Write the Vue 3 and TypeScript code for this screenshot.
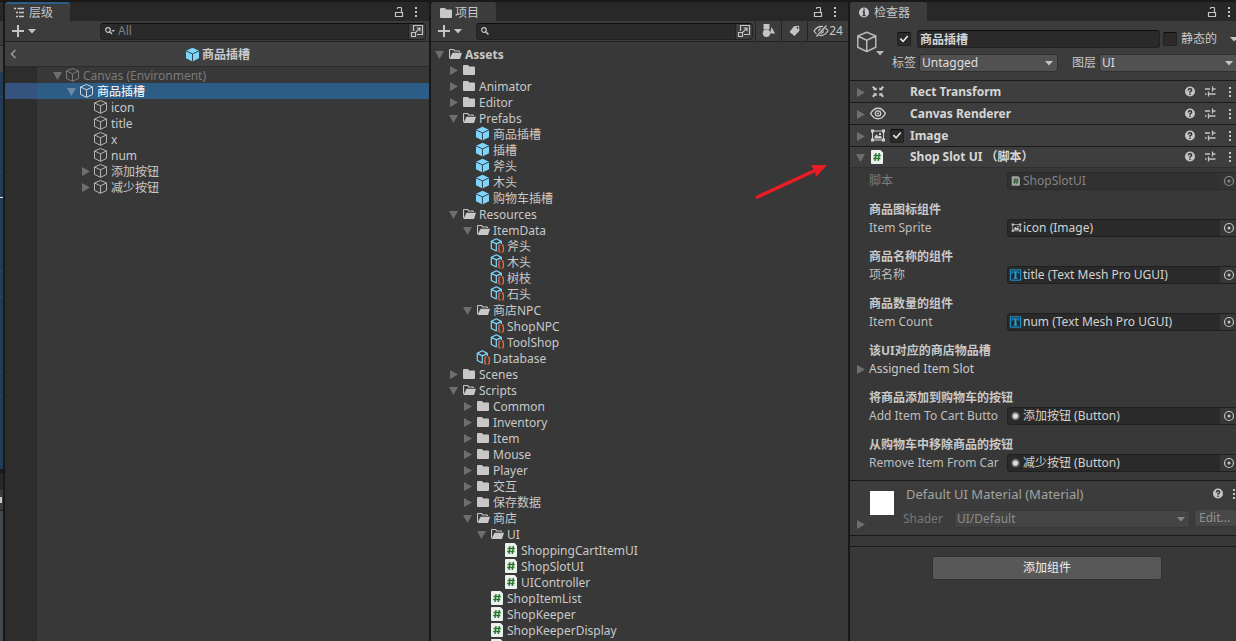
<script setup lang="ts">
import { ref } from 'vue'

type Fold = 'open' | 'closed' | 'none'

interface TreeNode {
  label: string
  depth: number
  icon: string
  fold: Fold
  state?: 'selected' | 'muted' | 'root'
}

interface ComponentHeader {
  title: string
  icon: string
  open: boolean
  toggle: boolean
}

interface Property {
  id: string
  heading?: string
  label: string
  kind: 'object' | 'foldout'
  icon?: string
  value?: string
  disabled?: boolean
}

const node = (depth: number, icon: string, fold: Fold, label: string, state?: TreeNode['state']): TreeNode => ({
  label,
  depth,
  icon,
  fold,
  state,
})

const hierarchy: TreeNode[] = [
  node(0, 'cube', 'open', 'Canvas (Environment)', 'muted'),
  node(1, 'cube', 'open', '商品插槽', 'selected'),
  node(2, 'cube', 'none', 'icon'),
  node(2, 'cube', 'none', 'title'),
  node(2, 'cube', 'none', 'x'),
  node(2, 'cube', 'none', 'num'),
  node(2, 'cube', 'closed', '添加按钮'),
  node(2, 'cube', 'closed', '减少按钮'),
]

const project: TreeNode[] = [
  node(0, 'folder-open', 'open', 'Assets', 'root'),
  node(1, 'folder', 'closed', ''),
  node(1, 'folder', 'closed', 'Animator'),
  node(1, 'folder', 'closed', 'Editor'),
  node(1, 'folder-open', 'open', 'Prefabs'),
  node(2, 'prefab', 'none', '商品插槽'),
  node(2, 'prefab', 'none', '插槽'),
  node(2, 'prefab', 'none', '斧头'),
  node(2, 'prefab', 'none', '木头'),
  node(2, 'prefab', 'none', '购物车插槽'),
  node(1, 'folder-open', 'open', 'Resources'),
  node(2, 'folder-open', 'open', 'ItemData'),
  node(3, 'asset', 'none', '斧头'),
  node(3, 'asset', 'none', '木头'),
  node(3, 'asset', 'none', '树枝'),
  node(3, 'asset', 'none', '石头'),
  node(2, 'folder-open', 'open', '商店NPC'),
  node(3, 'asset', 'none', 'ShopNPC'),
  node(3, 'asset', 'none', 'ToolShop'),
  node(2, 'asset', 'none', 'Database'),
  node(1, 'folder', 'closed', 'Scenes'),
  node(1, 'folder-open', 'open', 'Scripts'),
  node(2, 'folder', 'closed', 'Common'),
  node(2, 'folder', 'closed', 'Inventory'),
  node(2, 'folder', 'closed', 'Item'),
  node(2, 'folder', 'closed', 'Mouse'),
  node(2, 'folder', 'closed', 'Player'),
  node(2, 'folder', 'closed', '交互'),
  node(2, 'folder', 'closed', '保存数据'),
  node(2, 'folder-open', 'open', '商店'),
  node(3, 'folder-open', 'open', 'UI'),
  node(4, 'script', 'none', 'ShoppingCartItemUI'),
  node(4, 'script', 'none', 'ShopSlotUI'),
  node(4, 'script', 'none', 'UIController'),
  node(3, 'script', 'none', 'ShopItemList'),
  node(3, 'script', 'none', 'ShopKeeper'),
  node(3, 'script', 'none', 'ShopKeeperDisplay'),
  node(3, 'script', 'none', ''),
]

const components: ComponentHeader[] = [
  { title: 'Rect Transform', icon: 'rect-transform', open: false, toggle: false },
  { title: 'Canvas Renderer', icon: 'eye', open: false, toggle: false },
  { title: 'Image', icon: 'image', open: false, toggle: true },
  { title: 'Shop Slot UI （脚本）', icon: 'script', open: true, toggle: false },
]

const properties: Property[] = [
  { id: 'script', label: '脚本', kind: 'object', icon: 'script', value: 'ShopSlotUI', disabled: true },
  { id: 'sprite', heading: '商品图标组件', label: 'Item Sprite', kind: 'object', icon: 'image', value: 'icon (Image)' },
  { id: 'name', heading: '商品名称的组件', label: '项名称', kind: 'object', icon: 'tmp', value: 'title (Text Mesh Pro UGUI)' },
  { id: 'count', heading: '商品数量的组件', label: 'Item Count', kind: 'object', icon: 'tmp', value: 'num (Text Mesh Pro UGUI)' },
  { id: 'slot', heading: '该UI对应的商店物品槽', label: 'Assigned Item Slot', kind: 'foldout' },
  { id: 'add', heading: '将商品添加到购物车的按钮', label: 'Add Item To Cart Butto', kind: 'object', icon: 'button', value: '添加按钮 (Button)' },
  { id: 'remove', heading: '从购物车中移除商品的按钮', label: 'Remove Item From Car', kind: 'object', icon: 'button', value: '减少按钮 (Button)' },
]

const hierarchyQuery = ref('')
const projectQuery = ref('')
const objectName = ref('商品插槽')
const objectActive = ref(true)
const objectStatic = ref(false)
const imageEnabled = ref(true)
</script>

<template>
  <div class="editor">
    <svg class="sprite" aria-hidden="true">
      <symbol id="i-fold-open" viewBox="0 0 14 16"><path d="M1 5h9L5.500 13z" fill="currentColor" /></symbol>
      <symbol id="i-fold-closed" viewBox="0 0 14 16"><path d="M2 4v9l8-4.500z" fill="currentColor" /></symbol>
      <symbol id="i-caret" viewBox="0 0 8 8"><path d="M0 2h8L4 6.500z" fill="currentColor" /></symbol>
      <symbol id="i-cube" viewBox="0 0 16 16">
        <path d="M6.500 1.500 12.500 4v7.500L6.500 14.300.5 11.500V4zM.5 4l6 2.800 6-2.800M6.500 6.800v7.500" fill="none" stroke="currentColor" stroke-width="1" stroke-linejoin="round" />
      </symbol>
      <symbol id="i-prefab" viewBox="0 0 16 16">
        <path d="M6.500.7 13 3.700v7.500L6.500 14.500 0 11.200V3.700z" fill="#7fd6fd" />
        <path d="M0 3.900l6.500 3 6.500-3M6.500 6.900v7.600" fill="none" stroke="#38444c" stroke-width="1" />
      </symbol>
      <symbol id="i-asset" viewBox="0 0 16 16">
        <path d="M6.500 12.800l-.2.200-5-2.500V3.400L6.300.800l5 2.600v2.500M1.300 3.400l5 2.500 5-2.500M6.300 5.900v7" fill="none" stroke="#7fd6fd" stroke-width="1.200" stroke-linejoin="round" />
        <path d="M10.500 7H9.700q-.7 0-.7.700v2q0 .8-.9.800.9 0 .9.800v2q0 .7.700.7h.8M11.700 7h.8q.7 0 .7.700v2q0 .8.900.8-.9 0-.9.800v2q0 .7-.7.700h-.8" fill="none" stroke="#ff6d40" stroke-width="1.200" />
      </symbol>
      <symbol id="i-folder" viewBox="0 0 16 16"><path d="M1 4q0-1 1-1h4l1.200 1.500H12q1 0 1 1V12q0 1-1 1H2q-1 0-1-1z" fill="currentColor" /></symbol>
      <symbol id="i-folder-open" viewBox="0 0 16 16">
        <path d="M1 4q0-1 1-1h4l1 1.500h4q1 0 1 1V6h-1.100v-.4H6.300L5.400 4.100H2.100V11L1 13z" fill="currentColor" />
        <path d="M4.500 6.800H14L12 13H1.500z" fill="currentColor" />
      </symbol>
      <symbol id="i-script" viewBox="0 0 16 16">
        <path d="M1 2q0-1 1-1h8.500L13 3.500V14q0 1-1 1H2q-1 0-1-1z" fill="#ecf0ec" />
        <path d="M6 4 5 12M9.300 4l-1 8M3.600 6.500h7.200M3.200 9.500h7.200" fill="none" stroke="#26752c" stroke-width="1.400" />
      </symbol>
      <symbol id="i-list" viewBox="0 0 16 16"><path d="M1 3.500h2M4.500 3.500H11M3 7.500h2M6 7.500h5M3 11.500h2M6 11.500h5" stroke="currentColor" stroke-width="1.400" /></symbol>
      <symbol id="i-info" viewBox="0 0 16 16">
        <circle cx="6" cy="7.500" r="5" fill="currentColor" /><path d="M6 3.700v1.800M4.800 6.800H6v3.700M4.600 10.500h2.900" fill="none" stroke="#333" stroke-width="1.500" />
      </symbol>
      <symbol id="i-lock" viewBox="0 0 16 16"><path d="M4.500 8.500h7v4h-7zM6.500 5V4.300q0-.8.8-.8h2.400q.8 0 .8.8v4.200" fill="none" stroke="currentColor" stroke-width="1.200" /></symbol>
      <symbol id="i-dots" viewBox="0 0 16 16"><path d="M7 3h2v2H7zM7 7h2v2H7zM7 11h2v2H7z" fill="currentColor" /></symbol>
      <symbol id="i-plus" viewBox="0 0 12 12"><path d="M6 0v12M0 6h12" stroke="currentColor" stroke-width="2" /></symbol>
      <symbol id="i-search" viewBox="0 0 12 12"><circle cx="4" cy="5" r="2.300" fill="none" stroke="currentColor" stroke-width="1.200" /><path d="M5.700 6.700 8.500 9.500" stroke="currentColor" stroke-width="1.500" /></symbol>
      <symbol id="i-search-menu" viewBox="0 0 12 12"><circle cx="4" cy="5" r="2.300" fill="none" stroke="currentColor" stroke-width="1.200" /><path d="M5.700 6.700 8 9" stroke="currentColor" stroke-width="1.500" /><path d="M7.500 5H11L9.300 7z" fill="currentColor" /></symbol>
      <symbol id="i-expand" viewBox="0 0 16 16"><path d="M4.500 8V2.500h9v9H8M2.500 9.500h4v4h-4zM6.700 9.300 11 5M7.700 5H11v3.300" fill="none" stroke="currentColor" stroke-width="1.200" /></symbol>
      <symbol id="i-shapes" viewBox="0 0 16 16"><path d="M2.500 1h6v5.500h-6z" fill="currentColor" /><path d="m10.500 4 3.500 6.500H9z" fill="currentColor" /><circle cx="5.500" cy="10.300" r="3.700" fill="currentColor" /></symbol>
      <symbol id="i-tag" viewBox="0 0 16 16"><path fill-rule="evenodd" d="M7 3.200 12 2.700l.5 5-5 5.200L2.500 9zM9.500 4.800a1 1 0 1 0 2 0 1 1 0 0 0-2 0z" fill="currentColor" /></symbol>
      <symbol id="i-hidden" viewBox="0 0 16 16"><path d="M1 8q3-4.500 7-4.500T15 8q-3 4.500-7 4.500T1 8z" fill="none" stroke="currentColor" stroke-width="1.300" /><circle cx="8" cy="8" r="2.800" fill="currentColor" /><path d="M3 13.500 13 2.500" stroke="#3c3c3c" stroke-width="3" /><path d="M3.500 13.500 13.500 2.500" stroke="currentColor" stroke-width="1.300" /></symbol>
      <symbol id="i-eye" viewBox="0 0 16 16"><path d="M.6 7.500Q3.500 2.200 8 2.200t7.400 5.300Q12.500 12.800 8 12.800T.6 7.500z" fill="none" stroke="currentColor" stroke-width="1.400" /><circle cx="8" cy="7.500" r="2.700" fill="none" stroke="currentColor" stroke-width="1.200" /><circle cx="8" cy="7.500" r="1" fill="currentColor" /></symbol>
      <symbol id="i-rect-transform" viewBox="0 0 16 16"><path d="M2 3.500 3.700 2l1.500 2L6.700 3.500v2.800H3L4 5zM14 3.500 12.300 2l-1.500 2-1.500-.5v2.800H13L12 5zM2 12 3.700 13.500l1.500-2 1.500.5V9.200H3l1 1.300zM14 12l-1.700 1.500-1.500-2-1.500.5V9.200H13l-1 1.300z" fill="currentColor" /></symbol>
      <symbol id="i-image" viewBox="0 0 16 16"><path d="M3 3h10M3 12h10M2.500 4v8M13.500 4v8" stroke="currentColor" stroke-width="1" /><path d="M1 1.500h3v3H1zM12 1.500h3v3h-3zM1 10.500h3v3H1zM12 10.500h3v3h-3zM4.500 10.500v-2L6.500 6.500l2 2 1.500-1L11.700 9v1.500zM9 5h2v2H9z" fill="currentColor" /></symbol>
      <symbol id="i-tmp" viewBox="0 0 16 16"><path d="M2.500 2.500h11v11h-11z" fill="none" stroke="#1ba6ee" /><path d="M4.500 4.700h7v2M4.500 4.200v2.500M6 11.500h4" fill="none" stroke="#1ba6ee" /><path d="M8 4.500v7" stroke="#1ba6ee" stroke-width="2" /></symbol>
      <symbol id="i-button" viewBox="0 0 16 16"><circle cx="8" cy="8" r="4.500" fill="#707070" /><circle cx="8" cy="8" r="2.800" fill="#dedede" /></symbol>
      <symbol id="i-help" viewBox="0 0 16 16"><circle cx="8" cy="7.500" r="5" fill="currentColor" /><path d="M6.300 6.500Q6.300 4.800 8 4.800T9.700 6.200Q9.700 7.100 8 7.700V8.700M8 9.600V11" fill="none" stroke="#303030" stroke-width="1.400" /></symbol>
      <symbol id="i-sliders" viewBox="0 0 16 16"><path d="M3 5h5M11 5h2.500M10.500 2.500v5M3 10h1.500M7 10h6.500M6.500 7.500v5" fill="none" stroke="currentColor" stroke-width="1.300" /></symbol>
      <symbol id="i-target" viewBox="0 0 16 16"><circle cx="8" cy="8" r="4.500" fill="none" stroke="currentColor" stroke-width="1.200" /><circle cx="8" cy="8" r="1.500" fill="currentColor" /></symbol>
      <symbol id="i-back" viewBox="0 0 8 12"><path d="M6.500 2 2.500 6l4 4" fill="none" stroke="currentColor" stroke-width="1.500" /></symbol>
    </svg>

    <aside class="scene-edge" aria-hidden="true">
      <span class="edge-tab"></span>
      <span class="edge-bar"></span>
      <span class="edge-light"></span>
      <span class="edge-view"></span>
      <span class="edge-tab low"></span>
      <span class="edge-bar low"></span>
      <span class="edge-rest"></span>
    </aside>

    <section class="panel" aria-label="层级">
      <header class="tabs">
        <button class="tab focused"><svg class="ic"><use href="#i-list" /></svg>层级</button>
        <span class="grow"></span>
        <button class="tab-tool" aria-label="lock"><svg class="ic"><use href="#i-lock" /></svg></button>
        <button class="tab-tool" aria-label="menu"><svg class="ic"><use href="#i-dots" /></svg></button>
      </header>
      <div class="toolbar">
        <button class="add" aria-label="create"><svg class="plus"><use href="#i-plus" /></svg><svg class="caret"><use href="#i-caret" /></svg></button>
        <div class="search wide">
          <svg class="small"><use href="#i-search-menu" /></svg>
          <input v-model="hierarchyQuery" type="text" placeholder="All" aria-label="search hierarchy" />
          <button class="expand" aria-label="open search"><svg class="ic"><use href="#i-expand" /></svg></button>
        </div>
      </div>
      <div class="breadcrumb">
        <button class="back" aria-label="back"><svg><use href="#i-back" /></svg></button>
        <div class="crumb"><svg class="ic"><use href="#i-prefab" /></svg>商品插槽</div>
      </div>
      <ul class="tree scene-tree">
        <li v-for="(item, i) in hierarchy" :key="i" class="row" :class="item.state">
          <span class="gutter"></span>
          <span v-for="d in item.depth" :key="d" class="indent"></span>
          <svg class="fold"><use v-if="item.fold !== 'none'" :href="'#i-fold-' + item.fold" /></svg>
          <svg class="ic"><use :href="'#i-' + item.icon" /></svg>
          <span class="label">{{ item.label }}</span>
        </li>
      </ul>
    </section>

    <section class="panel project" aria-label="项目">
      <header class="tabs">
        <button class="tab"><svg class="ic"><use href="#i-folder" /></svg>项目</button>
        <span class="grow"></span>
        <button class="tab-tool" aria-label="lock"><svg class="ic"><use href="#i-lock" /></svg></button>
        <button class="tab-tool" aria-label="menu"><svg class="ic"><use href="#i-dots" /></svg></button>
      </header>
      <div class="toolbar">
        <button class="add" aria-label="create"><svg class="plus"><use href="#i-plus" /></svg><svg class="caret"><use href="#i-caret" /></svg></button>
        <div class="search">
          <svg class="small"><use href="#i-search" /></svg>
          <input v-model="projectQuery" type="text" aria-label="search project" />
          <button class="expand" aria-label="open search"><svg class="ic"><use href="#i-expand" /></svg></button>
        </div>
        <button class="filter" aria-label="filter by type"><svg class="ic"><use href="#i-shapes" /></svg></button>
        <button class="filter" aria-label="filter by label"><svg class="ic"><use href="#i-tag" /></svg></button>
        <button class="filter hidden-count"><svg class="ic"><use href="#i-hidden" /></svg>24</button>
      </div>
      <ul class="tree asset-tree">
        <li v-for="(item, i) in project" :key="i" class="row" :class="item.state">
          <span v-for="d in item.depth" :key="d" class="indent"></span>
          <svg class="fold"><use v-if="item.fold !== 'none'" :href="'#i-fold-' + item.fold" /></svg>
          <svg class="ic"><use :href="'#i-' + item.icon" /></svg>
          <span class="label">{{ item.label }}</span>
        </li>
      </ul>
      <svg class="pointer" viewBox="0 0 74 38" aria-hidden="true">
        <path d="M3.500 34 61 7.500" stroke="#ec1c24" stroke-width="3.500" stroke-linecap="round" />
        <path d="M57 2 73 2 62 14 61 8.500z" fill="#ec1c24" />
      </svg>
    </section>

    <section class="panel inspector" aria-label="检查器">
      <div class="sheet">
        <header class="tabs">
          <button class="tab"><svg class="ic"><use href="#i-info" /></svg>检查器</button>
          <span class="grow"></span>
          <button class="tab-tool" aria-label="lock"><svg class="ic"><use href="#i-lock" /></svg></button>
          <button class="tab-tool" aria-label="menu"><svg class="ic"><use href="#i-dots" /></svg></button>
        </header>

        <div class="object">
          <button class="object-icon" aria-label="icon"><svg class="big"><use href="#i-cube" /></svg><svg class="caret"><use href="#i-caret" /></svg></button>
          <div class="object-rows">
            <div class="object-row first">
              <input v-model="objectActive" type="checkbox" class="check" aria-label="active" />
              <input v-model="objectName" type="text" class="name" aria-label="name" />
              <label class="static"><input v-model="objectStatic" type="checkbox" class="check" />静态的</label>
              <button class="static-menu" aria-label="static flags"><svg class="caret"><use href="#i-caret" /></svg></button>
            </div>
            <div class="object-row second">
              <label for="tag">标签</label>
              <div class="select"><select id="tag"><option>Untagged</option></select><svg class="caret"><use href="#i-caret" /></svg></div>
              <label for="layer" class="layer">图层</label>
              <div class="select"><select id="layer"><option>UI</option></select><svg class="caret"><use href="#i-caret" /></svg></div>
            </div>
          </div>
        </div>

        <div v-for="c in components" :key="c.title" class="component" :class="{ open: c.open }">
          <svg class="fold"><use :href="c.open ? '#i-fold-open' : '#i-fold-closed'" /></svg>
          <svg class="ic"><use :href="'#i-' + c.icon" /></svg>
          <span class="toggle-slot"><input v-if="c.toggle" v-model="imageEnabled" type="checkbox" class="check" :aria-label="c.title" /></span>
          <h2>{{ c.title }}</h2>
          <button class="tool" aria-label="help"><svg class="ic"><use href="#i-help" /></svg></button>
          <button class="tool" aria-label="presets"><svg class="ic"><use href="#i-sliders" /></svg></button>
          <button class="tool" aria-label="menu"><svg class="ic"><use href="#i-dots" /></svg></button>
        </div>

        <div class="properties">
          <template v-for="p in properties" :key="p.id">
            <h3 v-if="p.heading">{{ p.heading }}</h3>
            <div class="property" :class="{ disabled: p.disabled }">
              <button v-if="p.kind === 'foldout'" class="foldout"><svg class="fold"><use href="#i-fold-closed" /></svg>{{ p.label }}</button>
              <template v-else>
                <label :for="'field-' + p.id">{{ p.label }}</label>
                <div class="field">
                  <svg class="kind" :class="p.icon"><use :href="'#i-' + p.icon" /></svg>
                  <input :id="'field-' + p.id" type="text" :value="p.value" readonly :disabled="p.disabled" />
                  <button class="pick" aria-label="pick object" :disabled="p.disabled"><svg class="ic"><use href="#i-target" /></svg></button>
                </div>
              </template>
            </div>
          </template>
        </div>

        <div class="material">
          <svg class="fold"><use href="#i-fold-closed" /></svg>
          <span class="thumb"></span>
          <div class="material-body">
            <div class="material-title">
              <span class="grow">Default UI Material (Material)</span>
              <button class="tool" aria-label="help"><svg class="ic"><use href="#i-help" /></svg></button>
              <button class="tool" aria-label="menu"><svg class="ic"><use href="#i-dots" /></svg></button>
            </div>
            <div class="shader">
              <label for="shader">Shader</label>
              <div class="select"><select id="shader" disabled><option>UI/Default</option></select><svg class="caret"><use href="#i-caret" /></svg></div>
              <button class="edit" disabled>Edit...</button>
            </div>
          </div>
        </div>
        <div class="divider"></div>
        <div class="footer"><button class="add-component">添加组件</button></div>
      </div>
    </section>
  </div>
</template>

<style>
html,
body {
  background: #191919;
  overflow: hidden;
}
</style>

<style scoped>
* {
  box-sizing: border-box;
}
.editor {
  display: grid;
  grid-template-columns: 3px minmax(0, 424fr) minmax(0, 417fr) minmax(0, 386fr);
  column-gap: 2px;
  height: 100vh;
  padding-top: 2px;
  overflow: hidden;
  background: #191919;
  color: #c8c8c8;
  font: 12px/16px 'Noto Sans', 'Noto Sans CJK SC', sans-serif;
}
.sprite {
  position: absolute;
  width: 0;
  height: 0;
}
button,
input,
select {
  margin: 0;
  padding: 0;
  border: 0;
  background: none;
  color: inherit;
  font: inherit;
  min-width: 0;
  outline: none;
}
svg {
  display: block;
  flex: none;
}
.ic {
  width: 16px;
  height: 16px;
}
.small {
  width: 12px;
  height: 12px;
}
.caret {
  width: 8px;
  height: 8px;
}
.fold {
  width: 14px;
  height: 16px;
  color: #6e6e6e;
}
.grow {
  flex: 1;
}

.scene-edge {
  display: flex;
  flex-direction: column;
}
.edge-tab {
  height: 19px;
  background: #282828;
}
.edge-tab.low {
  margin-top: 4px;
  height: 17px;
}
.edge-bar {
  height: 25px;
  background: #3c3c3c;
  border-bottom: 1px solid #232323;
}
.edge-bar.low {
  height: 21px;
  background: linear-gradient(#ccc, #ccc) 0 7px / 2px 6px no-repeat #3c3c3c;
}
.edge-light {
  height: 26px;
  background: #464646;
}
.edge-view {
  height: 397px;
  background: linear-gradient(#e8e8e8, #e8e8e8) 0 125px / 3px 1px no-repeat,
    repeating-linear-gradient(#213c57 0 24px, #2b4660 24px 25px);
}
.edge-rest {
  flex: 1;
  background: #43484d;
}

.panel {
  position: relative;
  display: flex;
  flex-direction: column;
  min-width: 0;
  overflow: hidden;
  background: #383838;
  border-radius: 3px 3px 0 0;
}
.tabs {
  display: flex;
  flex: none;
  height: 19px;
  padding-right: 5px;
  background: #282828;
}
.tab {
  display: flex;
  align-items: center;
  padding: 3px 17px 0 8px;
  background: #3c3c3c;
  border-radius: 3px 3px 0 0;
  color: #c8c8c8;
}
.tab.focused {
  padding-top: 1px;
  border-top: 2px solid #2c5d87;
}
.tab-tool {
  display: flex;
  justify-content: center;
  align-items: center;
  width: 17px;
  color: #c4c4c4;
}
.toolbar {
  display: flex;
  flex: none;
  align-items: center;
  height: 21px;
  background: #3c3c3c;
  border-bottom: 1px solid #232323;
}
.add {
  display: flex;
  align-items: center;
  gap: 4px;
  padding-left: 7px;
  color: #c4c4c4;
}
.plus {
  width: 12px;
  height: 12px;
}
.search {
  display: flex;
  flex: 1;
  align-items: center;
  height: 17px;
  margin: 0 2px 0 14px;
  overflow: hidden;
  background: #2a2a2a;
  border: 1px solid #212121;
  border-top-color: #0d0d0d;
  border-radius: 4px;
  color: #c4c4c4;
}
.search.wide {
  margin-left: 64px;
  margin-right: 3px;
}
.search .small {
  margin: 0 2px 0 3px;
}
.search input {
  flex: 1;
  height: 15px;
}
.search input::placeholder {
  color: #7f7f7f;
  opacity: 1;
}
.expand {
  width: 17px;
  height: 15px;
  display: flex;
  align-items: center;
  background: #3c3c3c;
  border-left: 1px solid #212121;
}
.filter {
  display: flex;
  align-items: center;
  justify-content: center;
  width: 26px;
  height: 20px;
  border-left: 1px solid #232323;
  color: #c4c4c4;
}
.filter.hidden-count {
  width: 41px;
}
.breadcrumb {
  position: relative;
  display: flex;
  flex: none;
  align-items: center;
  justify-content: center;
  height: 25px;
  background: #404040;
  border-bottom: 1px solid #2a2a2a;
}
.back {
  position: absolute;
  left: 4px;
}
.back svg {
  width: 8px;
  height: 12px;
  color: #9a9a9a;
}
.crumb {
  display: flex;
  align-items: center;
  padding: 1px 0 0 2px;
  font-weight: 700;
}

.tree {
  flex: 1;
  margin: 0;
  padding: 0;
  list-style: none;
  min-height: 0;
  overflow: hidden;
}
.scene-tree {
  background: linear-gradient(90deg, #2d2d2d 32px, #383838 32px);
}
.asset-tree {
  padding: 4px 0 0 3px;
}
.row {
  display: flex;
  height: 16px;
  white-space: nowrap;
}
.label {
  margin-left: 1px;
  line-height: 18px;
}
.gutter {
  width: 47px;
}
.indent {
  width: 14px;
}
.scene-tree .ic {
  color: #b4b4b4;
}
.row.selected {
  background: linear-gradient(90deg, #36527f 32px, #2c5d87 32px);
  color: #fff;
}
.row.selected .ic {
  color: #c8d4de;
}
.row.selected .fold {
  color: #6a8aa5;
}
.row.muted,
.row.muted .ic {
  color: #7a7a7a;
}
.row.root {
  font-weight: 700;
}
.pointer {
  position: absolute;
  top: 161px;
  right: 20px;
  width: 74px;
  height: 38px;
  fill: none;
}

.sheet {
  margin-right: -6px;
}
.object {
  display: flex;
  height: 60px;
  background: #3c3c3c;
  border-bottom: 1px solid #1a1a1a;
}
.object-icon {
  display: flex;
  align-items: flex-start;
  width: 42px;
  padding: 9px 0 0 7px;
  color: #b8b8b8;
}
.big {
  width: 24px;
  height: 24px;
}
.object-icon .caret {
  margin: 19px 0 0 -5px;
}
.object-rows {
  flex: 1;
  min-width: 0;
  padding: 9px 4px 0 0;
}
.object-row {
  display: flex;
  align-items: center;
  height: 18px;
}
.object-row.first {
  padding-left: 5px;
}
.object-row.second {
  margin-top: 6px;
}
.check {
  appearance: none;
  display: block;
  flex: none;
  width: 14px;
  height: 14px;
  background: #2a2a2a;
  border: 1px solid #212121;
  border-top-color: #0d0d0d;
  border-radius: 2px;
}
.check:checked::before {
  content: '';
  display: block;
  width: 12px;
  height: 12px;
  background: #e6e6e6;
  clip-path: polygon(14% 52%, 26% 42%, 42% 60%, 76% 20%, 86% 30%, 43% 80%);
}
.name {
  flex: 1;
  height: 18px;
  margin: 0 3px 0 6px;
  padding: 0 2px;
  background: #2a2a2a;
  border: 1px solid #212121;
  border-top-color: #0d0d0d;
  border-radius: 3px;
  color: #d2d2d2;
  font-weight: 700;
}
.static {
  display: flex;
  align-items: center;
  gap: 4px;
}
.static-menu {
  margin-left: 13px;
}
.select {
  position: relative;
  flex: 1;
  margin-left: 3px;
  min-width: 0;
  color: #dedede;
}
.select select {
  appearance: none;
  display: block;
  width: 100%;
  height: 18px;
  padding: 0 2px;
  background: #515151;
  border: 1px solid #303030;
  border-radius: 3px;
  line-height: 16px;
}
.select .caret {
  position: absolute;
  right: 5px;
  top: 5px;
  color: #c4c4c4;
  pointer-events: none;
}
.layer {
  margin-left: 14px;
}

.component {
  display: flex;
  align-items: center;
  height: 22px;
  padding: 0 2px 0 5px;
  background: #3e3e3e;
  border-bottom: 1px solid #1a1a1a;
}
.component.open {
  height: 21px;
  border-bottom-color: #303030;
}
.component > .ic {
  margin-left: 1px;
  color: #d0d0d0;
}
.toggle-slot {
  width: 20px;
  margin-left: 4px;
}
h2 {
  flex: 1;
  margin: 0;
  font-size: 12px;
  color: #d6d6d6;
}
.tool {
  display: flex;
  justify-content: center;
  width: 20px;
  color: #c4c4c4;
}

.properties {
  padding: 4px 4px 8px 19px;
}
h3 {
  margin: 11px 0 0;
  font-size: 12px;
  line-height: 18px;
}
.property {
  display: flex;
  align-items: center;
  height: 18px;
  color: #bebebe;
}
.property label {
  width: 136px;
  margin-right: 2px;
  overflow: hidden;
  white-space: nowrap;
}
.foldout {
  display: flex;
  margin-left: -14px;
  color: #c8c8c8;
}
.field {
  display: flex;
  flex: 1;
  align-items: center;
  height: 18px;
  overflow: hidden;
  background: #2a2a2a;
  border: 1px solid #202020;
  border-radius: 3px;
  color: #d2d2d2;
}
.field input {
  flex: 1;
  height: 16px;
}
.kind {
  width: 15px;
  height: 16px;
}
.kind.image,
.kind.script {
  width: 11px;
  height: 12px;
  margin: 0 1px 0 3px;
}
.pick {
  display: flex;
  align-items: center;
  justify-content: center;
  width: 17px;
  height: 16px;
  background: #373737;
  color: #c4c4c4;
}
.property.disabled {
  color: #7c7c7c;
}
.disabled .field {
  background: #313131;
  border-color: #2b2b2b;
  color: #858585;
}
.disabled .kind,
.disabled .pick {
  opacity: 0.6;
}

.material {
  display: flex;
  height: 56px;
  padding: 0 0 0 5px;
  background: #3c3c3c;
  border-top: 1px solid #1a1a1a;
  border-bottom: 1px solid #1a1a1a;
  color: #a2a2a2;
}
.material > .fold {
  margin-top: 35px;
}
.thumb {
  width: 24px;
  height: 24px;
  margin: 10px 9px 0 1px;
  background: #fff;
}
.material-body {
  flex: 1;
  min-width: 0;
}
.material-title {
  display: flex;
  align-items: center;
  height: 26px;
  padding-left: 3px;
  font-size: 13px;
}
.material-title .tool {
  width: 16px;
}
.shader {
  display: flex;
  align-items: center;
  height: 24px;
  color: #777;
}
.shader label {
  width: 48px;
}
.shader .select {
  color: #8c8c8c;
}
.shader select {
  background: #444;
  border-color: #383838;
  opacity: 1;
}
.shader .select .caret {
  color: #858585;
}
.edit {
  align-self: flex-start;
  width: 48px;
  height: 18px;
  margin: 2px 0 0 4px;
  padding-left: 4px;
  background: #484848;
  border: 1px solid #383838;
  border-radius: 3px;
  color: #939393;
  text-align: left;
}
.divider {
  height: 11px;
  border-bottom: 1px solid #1a1a1a;
}
.footer {
  display: flex;
  justify-content: center;
  padding: 9px 0 0 2px;
}
.add-component {
  width: 230px;
  height: 24px;
  background: #585858;
  border: 1px solid #303030;
  border-radius: 3px;
  color: #eee;
}
</style>
